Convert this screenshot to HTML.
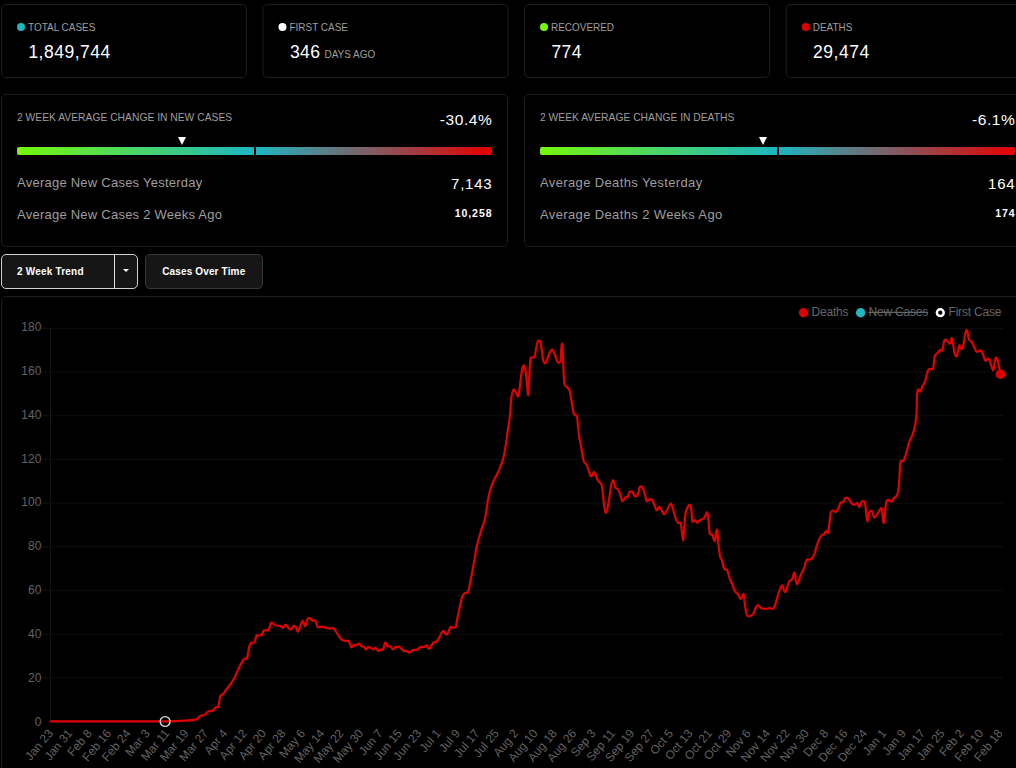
<!DOCTYPE html>
<html lang="en"><head><meta charset="utf-8"><title>COVID-19 Tracker</title>
<style>
html,body{margin:0;padding:0;background:#000;}
body{width:1016px;height:768px;overflow:hidden;position:relative;font-family:"Liberation Sans",sans-serif;color:#fff;}
.card{position:absolute;box-sizing:border-box;border:1px solid #1e1e1e;border-radius:5px;background:#000;}
.stat{top:4px;width:245.5px;height:74px;}
.dot{position:absolute;left:15.1px;top:17.6px;width:8px;height:8px;border-radius:50%;}
.lab{position:absolute;left:26.4px;top:15px;font-size:11px;line-height:14px;color:#9e9e9e;white-space:nowrap;transform:scaleX(.905);transform-origin:0 0;}
.val{position:absolute;left:26.4px;top:36px;font-size:17.5px;line-height:22px;color:#fff;white-space:nowrap;letter-spacing:0.5px;}
.val small{font-size:11px;color:#9e9e9e;margin-left:4px;letter-spacing:0;display:inline-block;transform:scaleX(.905);transform-origin:0 100%;}
.avg{top:94px;width:507px;height:153px;}
.ttl{position:absolute;left:15px;top:15px;font-size:11px;line-height:14px;color:#9e9e9e;white-space:nowrap;transform:scaleX(.937);transform-origin:0 0;}
.pct{position:absolute;right:14.6px;top:14.8px;font-size:15.5px;line-height:20px;color:#fff;letter-spacing:0.6px;}
.tri{position:absolute;top:41.7px;width:0;height:0;margin-left:-4px;border-left:4px solid transparent;border-right:4px solid transparent;border-top:8px solid #fff;font-size:0;line-height:0;color:transparent;overflow:hidden;}
.bar{position:absolute;left:15px;top:52px;width:475px;height:8px;}
.bar i{position:absolute;top:0;height:8px;}
.bar .l{left:0;width:236.5px;border-radius:2px 0 0 2px;background:linear-gradient(90deg,#76f70c,#1fb5c1);}
.bar .r{left:238.5px;width:236.5px;border-radius:0 2px 2px 0;background:linear-gradient(90deg,#1fb5c1,#e60000);}
.row{position:absolute;left:15px;right:15px;height:20px;}
.r1{top:78px;} .r2{top:110px;}
.k{position:absolute;left:0;top:0;font-size:13px;line-height:20px;color:#9e9e9e;white-space:nowrap;letter-spacing:0.24px;}
.v{position:absolute;right:0;top:0;line-height:20px;color:#fff;white-space:nowrap;}
.c2 .k{letter-spacing:0.37px;}
.big{font-size:15px;letter-spacing:0.76px;right:-0.4px;top:1.2px;} .sm{font-size:10.5px;font-weight:bold;letter-spacing:0.95px;right:-0.5px;top:-2px;}
.btn{position:absolute;top:254px;height:35px;box-sizing:border-box;border-radius:5px;background:#161616;font-size:10px;font-weight:bold;line-height:34px;color:#fff;white-space:nowrap;letter-spacing:0.2px;}
.b1{left:1px;width:137px;border:1px solid #d0d0d0;}
.b1 span{position:absolute;left:15px;top:0;}
.b1 b{position:absolute;left:112.4px;top:0;width:1px;height:33px;background:#e0e0e0;}
.b1 em{position:absolute;left:121px;top:14px;width:0;height:0;border-left:3px solid transparent;border-right:3px solid transparent;border-top:3.5px solid #fff;}
.b2{left:145px;width:117.5px;border:1px solid #383838;text-align:center;letter-spacing:0.15px;}
.cc{position:absolute;left:1px;top:296px;width:1031px;height:480px;box-sizing:border-box;border:1px solid #1e1e1e;border-radius:5px;}
.chart{position:absolute;left:0;top:296px;}
.tick{font-family:"Liberation Sans",sans-serif;font-size:12px;fill:#626262;}
.leg{font-family:"Liberation Sans",sans-serif;font-size:12px;letter-spacing:-0.2px;fill:#666;}
</style></head><body>
<div class="card stat" style="left:1px">
<span class="dot" style="background:#1fb5c1"></span><span class="lab">TOTAL CASES</span>
<div class="val">1,849,744</div></div>
<div class="card stat" style="left:262px;transform:translateX(0.5px)">
<span class="dot" style="background:#ffffff"></span><span class="lab">FIRST CASE</span>
<div class="val">346<small>DAYS AGO</small></div></div>
<div class="card stat" style="left:524px">
<span class="dot" style="background:#76f70c"></span><span class="lab">RECOVERED</span>
<div class="val">774</div></div>
<div class="card stat" style="left:785px;transform:translateX(0.7px)">
<span class="dot" style="background:#e00000"></span><span class="lab">DEATHS</span>
<div class="val">29,474</div></div>
<div class="card avg " style="left:1px">
<div class="ttl">2 WEEK AVERAGE CHANGE IN NEW CASES</div><div class="pct">-30.4%</div>
<div class="tri" style="left:180.3px"></div>
<div class="bar"><i class="l"></i><i class="r"></i></div>
<div class="row r1"><span class="k">Average New Cases Yesterday</span><span class="v big">7,143</span></div>
<div class="row r2"><span class="k">Average New Cases 2 Weeks Ago</span><span class="v sm">10,258</span></div>
</div>
<div class="card avg c2" style="left:524px">
<div class="ttl">2 WEEK AVERAGE CHANGE IN DEATHS</div><div class="pct">-6.1%</div>
<div class="tri" style="left:238px"></div>
<div class="bar"><i class="l"></i><i class="r"></i></div>
<div class="row r1"><span class="k">Average Deaths Yesterday</span><span class="v big">164</span></div>
<div class="row r2"><span class="k">Average Deaths 2 Weeks Ago</span><span class="v sm">174</span></div>
</div>
<div class="btn b1"><span>2 Week Trend</span><b></b><em></em></div>
<div class="btn b2">Cases Over Time</div>
<div class="cc"></div>
<svg class="chart" width="1016" height="472" viewBox="0 296 1016 472">
<text x="41.4" y="725.5" text-anchor="end" class="tick">0</text>
<line x1="52" y1="677.77" x2="1003" y2="677.77" stroke="#1c1c1c" stroke-width="1" stroke-dasharray="1 1"/>
<line x1="42" y1="677.77" x2="50" y2="677.77" stroke="#151515" stroke-width="1"/>
<text x="41.4" y="681.6" text-anchor="end" class="tick">20</text>
<line x1="52" y1="634.09" x2="1003" y2="634.09" stroke="#1c1c1c" stroke-width="1" stroke-dasharray="1 1"/>
<line x1="42" y1="634.09" x2="50" y2="634.09" stroke="#151515" stroke-width="1"/>
<text x="41.4" y="637.8" text-anchor="end" class="tick">40</text>
<line x1="52" y1="590.42" x2="1003" y2="590.42" stroke="#1c1c1c" stroke-width="1" stroke-dasharray="1 1"/>
<line x1="42" y1="590.42" x2="50" y2="590.42" stroke="#151515" stroke-width="1"/>
<text x="41.4" y="594.0" text-anchor="end" class="tick">60</text>
<line x1="52" y1="546.74" x2="1003" y2="546.74" stroke="#1c1c1c" stroke-width="1" stroke-dasharray="1 1"/>
<line x1="42" y1="546.74" x2="50" y2="546.74" stroke="#151515" stroke-width="1"/>
<text x="41.4" y="550.1" text-anchor="end" class="tick">80</text>
<line x1="52" y1="503.06" x2="1003" y2="503.06" stroke="#1c1c1c" stroke-width="1" stroke-dasharray="1 1"/>
<line x1="42" y1="503.06" x2="50" y2="503.06" stroke="#151515" stroke-width="1"/>
<text x="41.4" y="506.3" text-anchor="end" class="tick">100</text>
<line x1="52" y1="459.38" x2="1003" y2="459.38" stroke="#1c1c1c" stroke-width="1" stroke-dasharray="1 1"/>
<line x1="42" y1="459.38" x2="50" y2="459.38" stroke="#151515" stroke-width="1"/>
<text x="41.4" y="462.5" text-anchor="end" class="tick">120</text>
<line x1="52" y1="415.71" x2="1003" y2="415.71" stroke="#1c1c1c" stroke-width="1" stroke-dasharray="1 1"/>
<line x1="42" y1="415.71" x2="50" y2="415.71" stroke="#151515" stroke-width="1"/>
<text x="41.4" y="418.6" text-anchor="end" class="tick">140</text>
<line x1="52" y1="372.03" x2="1003" y2="372.03" stroke="#1c1c1c" stroke-width="1" stroke-dasharray="1 1"/>
<line x1="42" y1="372.03" x2="50" y2="372.03" stroke="#151515" stroke-width="1"/>
<text x="41.4" y="374.8" text-anchor="end" class="tick">160</text>
<line x1="52" y1="328.35" x2="1003" y2="328.35" stroke="#1c1c1c" stroke-width="1" stroke-dasharray="1 1"/>
<line x1="42" y1="328.35" x2="50" y2="328.35" stroke="#151515" stroke-width="1"/>
<text x="41.4" y="331.0" text-anchor="end" class="tick">180</text>
<line x1="50.5" y1="328" x2="50.5" y2="720.6" stroke="#151515" stroke-width="1"/>
<text transform="translate(53.7,733.6) rotate(-50)" text-anchor="end" class="tick">Jan 23</text>
<text transform="translate(73.1,733.6) rotate(-50)" text-anchor="end" class="tick">Jan 31</text>
<text transform="translate(92.5,733.6) rotate(-50)" text-anchor="end" class="tick">Feb 8</text>
<text transform="translate(111.8,733.6) rotate(-50)" text-anchor="end" class="tick">Feb 16</text>
<text transform="translate(131.2,733.6) rotate(-50)" text-anchor="end" class="tick">Feb 24</text>
<text transform="translate(150.6,733.6) rotate(-50)" text-anchor="end" class="tick">Mar 3</text>
<text transform="translate(170.0,733.6) rotate(-50)" text-anchor="end" class="tick">Mar 11</text>
<text transform="translate(189.4,733.6) rotate(-50)" text-anchor="end" class="tick">Mar 19</text>
<text transform="translate(208.8,733.6) rotate(-50)" text-anchor="end" class="tick">Mar 27</text>
<text transform="translate(228.1,733.6) rotate(-50)" text-anchor="end" class="tick">Apr 4</text>
<text transform="translate(247.5,733.6) rotate(-50)" text-anchor="end" class="tick">Apr 12</text>
<text transform="translate(266.9,733.6) rotate(-50)" text-anchor="end" class="tick">Apr 20</text>
<text transform="translate(286.3,733.6) rotate(-50)" text-anchor="end" class="tick">Apr 28</text>
<text transform="translate(305.7,733.6) rotate(-50)" text-anchor="end" class="tick">May 6</text>
<text transform="translate(325.0,733.6) rotate(-50)" text-anchor="end" class="tick">May 14</text>
<text transform="translate(344.4,733.6) rotate(-50)" text-anchor="end" class="tick">May 22</text>
<text transform="translate(363.8,733.6) rotate(-50)" text-anchor="end" class="tick">May 30</text>
<text transform="translate(383.2,733.6) rotate(-50)" text-anchor="end" class="tick">Jun 7</text>
<text transform="translate(402.6,733.6) rotate(-50)" text-anchor="end" class="tick">Jun 15</text>
<text transform="translate(422.0,733.6) rotate(-50)" text-anchor="end" class="tick">Jun 23</text>
<text transform="translate(441.3,733.6) rotate(-50)" text-anchor="end" class="tick">Jul 1</text>
<text transform="translate(460.7,733.6) rotate(-50)" text-anchor="end" class="tick">Jul 9</text>
<text transform="translate(480.1,733.6) rotate(-50)" text-anchor="end" class="tick">Jul 17</text>
<text transform="translate(499.5,733.6) rotate(-50)" text-anchor="end" class="tick">Jul 25</text>
<text transform="translate(518.9,733.6) rotate(-50)" text-anchor="end" class="tick">Aug 2</text>
<text transform="translate(538.2,733.6) rotate(-50)" text-anchor="end" class="tick">Aug 10</text>
<text transform="translate(557.6,733.6) rotate(-50)" text-anchor="end" class="tick">Aug 18</text>
<text transform="translate(577.0,733.6) rotate(-50)" text-anchor="end" class="tick">Aug 26</text>
<text transform="translate(596.4,733.6) rotate(-50)" text-anchor="end" class="tick">Sep 3</text>
<text transform="translate(615.8,733.6) rotate(-50)" text-anchor="end" class="tick">Sep 11</text>
<text transform="translate(635.1,733.6) rotate(-50)" text-anchor="end" class="tick">Sep 19</text>
<text transform="translate(654.5,733.6) rotate(-50)" text-anchor="end" class="tick">Sep 27</text>
<text transform="translate(673.9,733.6) rotate(-50)" text-anchor="end" class="tick">Oct 5</text>
<text transform="translate(693.3,733.6) rotate(-50)" text-anchor="end" class="tick">Oct 13</text>
<text transform="translate(712.7,733.6) rotate(-50)" text-anchor="end" class="tick">Oct 21</text>
<text transform="translate(732.1,733.6) rotate(-50)" text-anchor="end" class="tick">Oct 29</text>
<text transform="translate(751.4,733.6) rotate(-50)" text-anchor="end" class="tick">Nov 6</text>
<text transform="translate(770.8,733.6) rotate(-50)" text-anchor="end" class="tick">Nov 14</text>
<text transform="translate(790.2,733.6) rotate(-50)" text-anchor="end" class="tick">Nov 22</text>
<text transform="translate(809.6,733.6) rotate(-50)" text-anchor="end" class="tick">Nov 30</text>
<text transform="translate(829.0,733.6) rotate(-50)" text-anchor="end" class="tick">Dec 8</text>
<text transform="translate(848.3,733.6) rotate(-50)" text-anchor="end" class="tick">Dec 16</text>
<text transform="translate(867.7,733.6) rotate(-50)" text-anchor="end" class="tick">Dec 24</text>
<text transform="translate(887.1,733.6) rotate(-50)" text-anchor="end" class="tick">Jan 1</text>
<text transform="translate(906.5,733.6) rotate(-50)" text-anchor="end" class="tick">Jan 9</text>
<text transform="translate(925.9,733.6) rotate(-50)" text-anchor="end" class="tick">Jan 17</text>
<text transform="translate(945.3,733.6) rotate(-50)" text-anchor="end" class="tick">Jan 25</text>
<text transform="translate(964.6,733.6) rotate(-50)" text-anchor="end" class="tick">Feb 2</text>
<text transform="translate(984.0,733.6) rotate(-50)" text-anchor="end" class="tick">Feb 10</text>
<text transform="translate(1003.4,733.6) rotate(-50)" text-anchor="end" class="tick">Feb 18</text>
<path d="M50.7,721.4C70.6,721.4 127.2,721.3 150.0,721.3C172.8,721.3 157.7,721.3 164.8,721.3C171.9,721.2 179.1,721.0 185.4,720.6C191.7,720.2 193.5,720.2 196.3,719.4C199.1,718.6 197.4,717.6 199.2,716.6C201.0,715.6 203.3,715.4 205.1,714.4C206.9,713.4 206.6,712.2 208.1,711.5C209.6,710.8 211.0,711.5 212.6,710.7C214.2,709.8 214.8,707.9 215.9,707.2C217.0,707.2 217.4,707.2 218.3,707.2C219.2,705.0 219.3,698.8 220.3,696.1C221.3,693.8 221.7,695.6 223.2,693.8C224.7,692.0 226.3,689.3 227.8,687.3C229.3,685.3 229.3,685.9 230.7,683.9C232.1,681.9 232.8,680.9 234.6,677.4C236.4,673.9 237.7,670.3 239.6,666.6C241.5,662.9 242.6,660.8 244.1,659.1C245.6,658.3 245.8,659.1 246.9,658.3C248.0,655.7 248.4,649.0 249.4,645.9C250.4,642.8 250.8,643.3 251.8,642.6C252.8,642.6 253.3,642.6 254.3,642.6C255.3,641.1 255.7,636.5 256.7,635.1C257.7,635.1 258.5,635.5 259.4,635.5C260.3,635.5 260.5,635.5 261.4,635.1C262.3,634.1 262.9,631.3 263.8,630.4C264.7,630.4 265.2,630.4 266.1,630.4C267.0,630.4 267.4,630.4 268.5,630.2C269.6,628.6 270.2,623.3 271.5,622.3C272.8,622.3 273.3,624.6 275.0,625.3C276.7,625.7 278.3,625.3 279.9,625.7C281.5,626.2 281.7,627.8 282.9,627.8C284.1,627.6 284.3,624.7 285.8,624.7C287.3,625.1 288.6,629.4 290.2,629.6C291.8,629.6 292.6,626.2 293.7,625.7C294.8,625.7 294.8,625.7 295.7,626.9C296.6,628.1 296.6,631.6 298.0,631.6C299.4,630.4 301.2,622.0 302.6,620.9C304.0,620.9 304.1,626.3 305.1,626.3C306.1,625.9 306.6,620.5 307.5,618.8C308.4,618.0 308.8,618.0 309.8,618.0C310.8,618.4 311.3,620.2 312.4,620.7C313.5,620.7 314.3,620.7 315.4,620.7C316.5,622.0 316.5,626.0 317.7,627.2C318.9,627.2 318.8,626.7 321.3,626.7C323.8,627.0 327.7,628.4 330.1,628.6C332.5,628.6 330.7,627.8 333.1,627.8C335.5,630.1 339.0,637.4 341.9,640.0C344.8,641.0 346.4,640.8 347.8,641.0C349.2,641.0 348.2,641.0 348.9,641.0C349.6,642.3 350.4,646.5 351.4,647.3C352.4,647.3 352.9,645.3 353.8,644.9C354.7,644.9 355.1,645.3 356.1,645.3C357.1,645.1 357.8,643.7 358.9,643.7C360.0,643.9 360.7,645.7 361.7,646.3C362.7,646.9 363.1,646.3 364.0,646.9C364.9,647.6 365.3,649.6 366.2,649.6C367.1,649.6 367.6,647.2 368.5,646.9C369.4,646.9 370.0,647.4 370.9,647.9C371.8,648.4 372.2,649.3 373.1,649.3C374.0,649.3 374.4,647.9 375.4,647.9C376.4,648.2 377.2,650.5 378.2,650.8C379.2,650.8 379.7,649.8 380.6,649.6C381.5,649.6 382.0,649.8 382.9,649.8C383.8,648.4 384.4,643.1 385.3,642.4C386.2,642.4 386.6,645.5 387.6,646.3C388.6,646.3 389.4,646.3 390.4,646.3C391.4,646.9 391.8,649.3 392.8,649.4C393.8,649.4 394.2,647.4 395.5,646.9C396.8,646.9 397.4,646.9 399.1,646.9C400.8,647.8 402.4,650.4 404.0,651.2C405.6,651.2 405.8,650.8 406.9,650.8C408.0,651.1 408.0,652.8 409.3,652.8C410.6,652.6 411.7,650.4 413.2,649.8C414.7,649.8 415.3,649.8 416.8,649.8C418.3,649.2 419.2,647.5 420.7,646.9C422.2,646.9 423.1,646.9 424.3,646.9C425.5,646.6 425.7,645.3 426.6,645.3C427.5,645.7 427.6,648.9 429.0,648.9C430.4,648.3 432.1,643.8 433.5,642.4C434.9,641.8 435.1,642.4 436.1,641.8C437.1,641.1 437.0,641.2 438.4,639.0C439.8,636.8 441.5,631.8 443.0,630.9C444.5,630.9 445.0,633.9 445.9,634.5C446.8,634.5 446.6,634.5 447.5,634.1C448.4,632.5 449.5,627.9 450.6,626.6C451.7,626.6 451.9,627.5 452.8,627.6C453.7,627.6 454.5,627.6 455.2,627.2C455.9,626.8 455.5,627.2 456.1,625.6C456.7,623.1 456.8,620.7 458.1,614.8C459.4,608.9 461.0,600.4 462.4,596.1C463.8,593.1 464.0,593.8 465.0,593.1C466.0,592.6 466.8,593.1 467.6,592.6C468.4,591.8 467.5,592.6 468.9,589.2C470.3,582.2 473.3,566.0 474.8,557.7C476.3,549.4 475.1,553.2 476.4,547.6C477.7,542.0 479.6,535.6 481.3,529.9C483.0,524.2 483.5,525.4 484.9,519.1C486.3,512.8 486.9,505.1 488.2,498.4C489.5,491.7 490.2,489.7 491.6,485.6C493.0,481.5 493.6,480.9 495.1,477.8C496.6,474.7 497.5,473.6 499.1,469.9C500.7,466.2 501.7,463.6 503.0,459.1C504.3,454.6 504.4,453.1 505.4,447.2C506.4,441.3 507.0,435.8 507.9,429.5C508.8,423.2 509.2,422.2 509.9,415.7C510.6,409.2 510.7,402.5 511.5,397.2C512.3,391.9 513.0,390.1 513.9,389.3C514.8,389.3 515.3,391.7 516.2,393.2C517.1,394.7 517.4,396.7 518.3,396.7C519.2,394.0 519.8,385.7 520.6,379.8C521.4,373.9 521.9,370.1 522.5,367.2C523.1,365.4 523.2,365.4 523.8,365.4C524.4,366.4 525.0,367.5 525.7,372.0C526.4,376.5 526.7,383.0 527.2,387.7C527.7,392.4 527.8,395.3 528.2,395.3C528.6,393.7 528.6,387.3 529.1,379.8C529.6,372.3 529.7,362.4 530.7,357.8C531.7,357.0 533.2,357.8 534.3,357.0C535.4,354.8 535.7,350.0 536.4,346.8C537.1,343.6 537.3,342.0 538.0,340.8C538.7,340.8 539.1,340.8 539.8,340.8C540.5,342.2 540.8,343.9 541.4,347.6C542.0,351.3 542.3,356.3 543.0,359.4C543.7,362.5 544.2,363.1 545.0,363.3C545.8,363.3 546.0,362.2 546.9,360.2C547.8,358.2 548.3,355.2 549.3,353.1C550.3,351.0 551.1,349.8 552.0,349.6C552.9,349.6 553.1,350.3 554.0,352.3C554.9,354.3 555.5,357.3 556.4,359.4C557.3,361.5 557.5,362.3 558.3,362.8C559.1,362.8 559.6,362.8 560.3,361.7C561.0,358.2 561.2,348.8 561.6,345.2C562.0,343.6 562.2,343.6 562.5,343.6C562.8,346.4 562.7,351.5 563.1,359.4C563.5,367.3 563.6,377.5 564.3,383.0C565.0,386.9 565.6,385.5 566.6,386.9C567.6,388.3 568.5,387.4 569.4,390.1C570.3,392.8 570.5,396.1 571.3,400.3C572.1,404.5 572.6,408.5 573.2,411.3C573.8,414.1 573.8,413.5 574.5,414.5C575.2,415.5 576.2,414.5 576.9,416.4C577.6,418.9 577.5,422.7 578.0,427.1C578.5,431.5 578.9,435.0 579.4,438.4C579.9,441.8 579.8,439.8 580.7,444.3C581.6,448.8 582.5,456.9 583.7,461.0C584.9,465.0 585.2,461.9 586.7,465.0C588.2,468.1 589.7,475.0 591.2,476.4C592.7,476.4 592.8,471.9 594.1,471.9C595.4,472.6 596.3,477.6 597.5,479.7C598.7,481.8 599.1,481.2 600.0,482.6C600.9,484.0 601.2,482.6 602.0,486.6C602.8,490.7 603.1,498.0 603.9,503.3C604.7,508.6 605.0,512.9 605.9,513.1C606.8,513.1 607.3,509.4 608.3,504.3C609.3,499.2 609.9,492.4 610.8,487.6C611.7,482.8 612.1,480.1 613.0,480.1C613.9,480.1 614.4,485.7 615.4,487.6C616.4,489.5 617.0,487.7 618.1,489.5C619.2,491.3 619.8,494.0 620.7,496.4C621.6,498.8 621.7,501.1 622.6,501.3C623.5,501.3 624.2,498.3 625.2,497.4C626.2,497.0 626.7,497.4 627.6,497.0C628.5,495.8 629.0,492.6 629.9,491.5C630.8,491.5 631.1,491.5 632.1,491.5C633.1,492.5 633.9,495.6 635.0,496.4C636.1,496.4 636.4,496.4 637.4,495.4C638.4,493.4 639.0,488.4 640.0,486.6C641.0,486.6 641.4,486.6 642.3,486.6C643.2,487.8 643.4,489.6 644.3,492.5C645.2,495.4 645.9,499.9 646.9,501.3C647.9,501.3 648.3,499.8 649.2,499.4C650.1,499.4 650.6,499.4 651.6,499.4C652.6,500.4 653.1,502.1 654.1,504.3C655.1,506.5 655.7,509.7 656.7,510.2C657.7,510.2 658.2,506.9 659.1,506.9C660.0,506.9 660.4,508.8 661.4,510.2C662.4,511.6 663.0,513.9 664.0,514.1C665.0,514.1 665.5,512.8 666.5,511.2C667.5,509.6 668.0,507.8 668.9,506.3C669.8,504.8 670.1,503.7 670.9,503.7C671.7,504.1 671.9,505.5 672.8,508.2C673.7,510.9 674.2,514.2 675.2,517.1C676.2,520.0 676.7,521.4 677.8,522.6C678.9,523.0 679.6,522.6 680.7,523.0C681.8,526.5 682.2,540.3 683.1,540.3C684.0,539.1 684.3,523.3 685.0,517.1C685.7,510.9 685.9,511.5 686.6,509.2C687.3,506.9 687.9,506.6 688.6,505.7C689.3,504.9 689.7,504.9 690.2,504.9C690.7,505.6 690.8,505.8 691.3,509.2C691.8,512.6 691.8,519.8 692.5,522.0C693.2,522.0 694.0,520.0 694.9,520.0C695.8,520.1 695.9,522.6 697.0,522.6C698.1,522.6 698.9,521.0 700.4,520.0C701.9,519.0 703.0,519.3 704.3,517.7C705.6,516.1 706.2,512.2 707.1,512.2C708.0,513.3 708.2,518.7 708.7,523.0C709.2,527.3 709.1,531.4 709.8,533.8C710.5,534.8 711.2,533.8 712.2,534.8C713.2,536.3 713.8,541.3 714.6,541.3C715.4,540.9 715.6,535.2 716.1,532.8C716.6,530.4 716.6,529.3 717.1,529.3C717.6,531.7 717.9,539.2 718.5,544.6C719.1,550.0 719.4,553.3 720.1,556.5C720.8,559.7 721.1,557.8 722.0,560.4C722.9,563.0 723.4,567.4 724.4,569.3C725.4,569.8 725.9,569.3 727.0,569.8C728.1,571.8 729.0,576.7 730.0,579.4C731.0,582.1 731.0,580.9 732.0,583.3C733.0,585.7 733.7,589.0 734.9,591.2C736.1,593.4 736.7,592.6 737.9,594.2C739.1,595.8 739.7,599.1 740.8,599.1C741.9,599.0 742.6,593.8 743.4,593.8C744.2,594.8 744.1,599.8 744.8,604.0C745.5,608.2 745.9,612.3 746.7,614.8C747.5,616.4 747.4,616.4 748.7,616.4C750.0,616.2 751.8,615.6 753.2,613.9C754.6,612.2 754.6,609.7 755.6,608.0C756.6,606.3 756.8,605.4 758.0,605.4C759.2,605.5 760.0,607.6 761.5,608.3C763.0,608.9 763.8,608.9 765.4,608.9C767.0,608.8 767.9,608.0 769.4,608.0C770.9,608.0 771.6,608.9 772.9,608.9C774.2,607.9 774.4,606.5 775.7,603.0C777.0,599.5 777.9,594.7 779.2,591.2C780.5,587.7 781.0,585.3 782.2,585.3C783.4,585.5 783.7,592.2 785.1,592.2C786.5,591.4 787.7,584.0 789.1,581.4C790.5,579.4 790.9,581.2 792.0,579.4C793.1,577.6 793.4,572.5 794.4,572.5C795.4,573.5 795.6,583.9 796.9,584.3C798.2,584.3 799.5,577.6 800.9,574.5C802.3,571.4 802.6,571.6 803.8,568.6C805.0,565.6 805.6,561.5 806.8,559.7C808.0,559.7 808.3,559.7 809.7,559.7C811.1,558.9 812.1,559.1 813.7,555.8C815.3,552.5 816.2,546.9 817.6,543.0C819.0,539.1 819.6,537.9 820.9,536.1C822.2,534.3 823.1,535.1 824.1,534.1C825.1,533.1 825.3,531.4 826.1,531.2C826.9,531.2 827.1,533.1 828.0,533.1C828.9,529.4 829.8,517.0 830.8,512.5C831.8,510.5 832.0,510.6 833.0,510.5C834.0,510.5 834.6,512.1 835.7,512.1C836.8,511.7 837.3,510.4 838.3,508.5C839.3,506.6 839.6,503.9 840.6,502.6C841.6,502.2 842.3,502.6 843.2,502.2C844.1,501.3 844.3,499.1 845.1,498.2C845.9,497.7 846.3,497.7 847.1,497.7C847.9,498.0 848.4,498.7 849.3,499.9C850.2,501.1 850.8,502.6 851.8,503.6C852.8,504.6 853.4,504.9 854.4,504.9C855.4,504.8 855.9,502.9 856.9,502.9C857.9,503.3 858.6,507.0 859.5,507.0C860.4,506.9 860.5,503.6 861.2,502.4C861.9,501.2 862.1,501.0 862.8,501.0C863.5,501.0 864.2,501.0 864.9,502.4C865.6,504.9 865.7,509.6 866.2,513.4C866.7,517.2 866.9,521.5 867.4,521.5C867.9,521.5 868.2,515.5 868.8,513.4C869.4,511.3 869.8,511.2 870.5,510.9C871.2,510.9 871.4,510.9 872.2,511.7C873.0,513.0 873.2,517.4 874.4,517.6C875.6,517.6 876.7,514.6 878.1,512.6C879.5,510.6 880.5,507.8 881.5,507.8C882.5,509.7 882.6,518.9 883.2,521.9C883.8,523.0 883.8,523.0 884.3,523.0C884.8,519.6 885.1,509.5 885.7,504.9C886.3,500.3 886.4,501.2 887.1,500.2C887.8,499.9 888.2,499.9 889.1,499.9C890.0,500.2 890.7,501.6 891.6,501.6C892.5,501.3 892.8,499.4 893.8,498.2C894.8,497.0 895.8,497.3 896.7,495.6C897.6,493.9 897.8,493.9 898.4,489.7C899.0,485.5 899.2,480.2 899.6,474.5C900.0,468.8 899.8,464.1 900.6,461.3C901.4,460.6 902.4,461.3 903.5,460.6C904.6,459.2 904.8,458.0 906.0,454.2C907.2,450.4 908.0,445.6 909.4,441.5C910.8,437.4 911.6,437.5 912.8,433.9C914.0,430.3 914.6,427.8 915.3,423.7C916.0,419.6 916.1,419.4 916.5,413.5C916.9,407.6 916.7,398.8 917.1,394.0C917.5,389.3 917.8,389.8 918.4,389.3C919.0,389.3 919.6,391.7 920.3,391.7C921.0,391.2 921.2,389.0 922.1,386.9C923.0,384.8 923.9,384.5 925.0,381.4C926.1,378.3 926.8,373.7 927.7,371.2C928.6,368.8 928.7,369.2 929.7,368.8C930.7,368.8 931.9,369.3 932.9,369.3C933.9,366.8 933.9,359.7 934.7,356.5C935.5,353.4 936.0,354.7 937.1,353.4C938.2,352.1 939.3,350.4 940.3,349.9C941.3,349.9 941.5,350.7 942.3,350.7C943.1,348.8 943.5,342.7 944.2,340.5C944.9,339.7 945.0,339.7 945.8,339.7C946.6,340.0 947.3,341.2 948.1,342.0C948.9,342.8 949.3,343.6 950.0,343.6C950.7,342.8 951.1,338.4 951.7,338.1C952.3,338.1 952.4,339.0 952.9,342.0C953.4,345.0 953.7,350.2 954.4,353.1C955.1,356.0 955.7,356.5 956.5,356.5C957.3,355.7 957.8,351.4 958.4,349.1C959.0,346.8 959.0,345.2 959.6,345.2C960.2,345.2 960.8,348.9 961.5,349.1C962.2,349.1 962.4,348.8 963.1,346.0C963.8,343.2 964.3,338.2 965.0,335.0C965.7,331.8 966.0,329.8 966.6,329.8C967.2,329.8 967.6,333.0 968.1,335.0C968.6,337.0 968.4,338.3 969.1,339.7C969.8,341.1 970.7,340.6 971.7,342.0C972.7,343.4 973.1,344.8 974.1,346.8C975.1,348.8 975.6,350.9 976.5,351.8C977.4,351.8 977.9,351.5 978.8,351.2C979.7,350.9 980.1,350.4 980.9,350.4C981.7,350.9 981.9,351.8 982.8,353.9C983.7,356.0 984.3,360.0 985.4,360.9C986.5,360.9 987.4,358.6 988.3,358.6C989.2,358.6 989.0,358.6 989.9,360.9C990.8,363.3 992.1,370.1 993.0,370.4C993.9,370.4 994.0,365.1 994.6,362.5C995.2,359.9 995.3,358.3 995.8,357.5C996.3,357.5 996.6,357.5 997.1,358.6C997.6,359.9 997.8,361.0 998.5,364.1C999.2,367.2 1000.0,372.0 1000.4,374.0" fill="none" stroke="#e20000" stroke-width="2.2" stroke-linejoin="round" stroke-linecap="round"/>
<circle cx="165.1" cy="721.5" r="4.9" fill="none" stroke="#d8d8d8" stroke-width="1.4"/>
<circle cx="1000.4" cy="374.2" r="4.8" fill="#e00000"/>
<circle cx="803.5" cy="312.7" r="4.7" fill="#e00000"/>
<text x="811.5" y="316" class="leg">Deaths</text>
<circle cx="860.6" cy="312.7" r="4.7" fill="#1fb5c1"/>
<text x="868.5" y="316" class="leg">New Cases</text>
<line x1="868.5" y1="312.3" x2="928" y2="312.3" stroke="#666" stroke-width="1.2"/>
<circle cx="940.3" cy="312.7" r="3.4" fill="#000" stroke="#fff" stroke-width="2.5"/>
<text x="948.5" y="316" class="leg">First Case</text>
</svg>
</body></html>
